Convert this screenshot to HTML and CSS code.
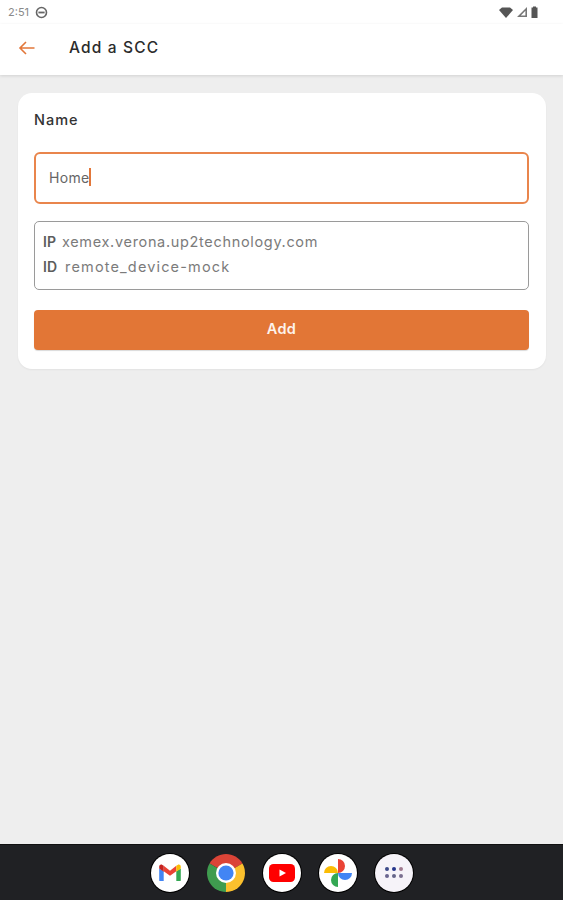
FILE: index.html
```html
<!DOCTYPE html>
<html lang="en">
<head>
    <meta charset="UTF-8">
    <meta name="viewport" content="width=device-width, initial-scale=1.0">
    <title>Add a SCC</title>
    <link rel="stylesheet" href="styles.css">
</head>
<body>
    <div class="app">
        <!-- Status bar -->
        <div class="status-bar">
            <div class="status-left">
                <span class="clock">2:51</span>
                <svg class="status-icon" width="13" height="13" viewBox="0 0 13 13">
                    <circle cx="6.5" cy="6.5" r="5" fill="none" stroke="#666" stroke-width="1.6"/>
                    <rect x="3.4" y="5.6" width="6.2" height="1.8" fill="#666"/>
                </svg>
            </div>
            <div class="status-right">
                <svg width="14" height="11" viewBox="0 0 14 11"><path d="M0 3 L3 0.6 H11 L14 3 L7 11 Z" fill="#555"/></svg>
                <svg width="12" height="12" viewBox="0 0 12 12"><path d="M11 1 V11 H1 Z M9.4 4.8 L4.8 9.6 H9.4 Z" fill="#777" fill-rule="evenodd"/></svg>
                <svg width="7" height="12" viewBox="0 0 7 12"><path d="M2 0.5 H5 V1.5 H6.5 V12 H0.5 V1.5 H2 Z" fill="#555"/></svg>
            </div>
        </div>

        <!-- App bar -->
        <header class="app-bar">
            <svg class="back" width="18" height="16" viewBox="0 0 18 16">
                <path d="M16.5 8 H2 M8 2 L2 8 L8 14" fill="none" stroke="#e2773a" stroke-width="1.6"/>
            </svg>
            <h1>Add a SCC</h1>
        </header>

        <!-- Content -->
        <main class="content">
            <section class="card">
                <div class="field-label">Name</div>
                <div class="name-input">Home<span class="caret"></span></div>
                <div class="info-box">
                    <div class="info-row"><b>IP</b> <span class="ip-value">xemex.verona.up2technology.com</span></div>
                    <div class="info-row"><b>ID</b> <span class="id-value">remote_device-mock</span></div>
                </div>
                <button class="add-btn">Add</button>
            </section>
        </main>

        <!-- Dock -->
        <footer class="dock">
            <div class="dock-icon">
                <svg width="26" height="18" viewBox="0 0 26 20">
                    <path d="M1 5 V18 a1 1 0 0 0 1 1 H6 V8 Z" fill="#4285f4"/>
                    <path d="M20 8 V19 H24 a1 1 0 0 0 1-1 V5 Z" fill="#34a853"/>
                    <path d="M6 8 L13 13 L20 8 V2 L13 7.5 L6 2 Z" fill="#ea4335"/>
                    <path d="M1 5 L6 8.5 V2 L4.5 1 C3 0 1 1 1 3 Z" fill="#c5221f"/>
                    <path d="M25 5 L20 8.5 V2 L21.5 1 C23 0 25 1 25 3 Z" fill="#fbbc04"/>
                </svg>
            </div>
            <div class="dock-icon chrome">
                <svg width="40" height="40" viewBox="0 0 40 40">
                    <path d="M20 20 L2.7 10 A20 20 0 0 1 37.3 10 Z" fill="#db4437"/>
                    <path d="M20 20 L37.3 10 A20 20 0 0 1 20 40 Z" fill="#fbc02d"/>
                    <path d="M20 20 L20 40 A20 20 0 0 1 2.7 10 Z" fill="#3f9c4f"/>
                    <circle cx="20" cy="20" r="10.5" fill="#fff"/>
                    <circle cx="20" cy="20" r="8" fill="#4285f4"/>
                </svg>
            </div>
            <div class="dock-icon">
                <svg width="26" height="18" viewBox="0 0 26 18">
                    <rect width="26" height="18" rx="4.5" fill="#f00"/>
                    <path d="M10.5 5.5 L17 9 L10.5 12.5 Z" fill="#fff"/>
                </svg>
            </div>
            <div class="dock-icon">
                <svg width="30" height="30" viewBox="0 0 30 30">
                    <path d="M15 15 V1 A7 7 0 0 1 15 15 Z" fill="#ea4335"/>
                    <path d="M15 15 H29 A7 7 0 0 1 15 15 Z" fill="#4285f4"/>
                    <path d="M15 15 V29 A7 7 0 0 1 15 15 Z" fill="#34a853"/>
                    <path d="M15 15 H1 A7 7 0 0 1 15 15 Z" fill="#fbbc04"/>
                </svg>
            </div>
            <div class="dock-icon apps">
                <div class="apps-grid">
                    <span class="dot-a"></span><span class="dot-b"></span><span class="dot-c"></span>
                    <span class="dot-d"></span><span class="dot-e"></span><span class="dot-f"></span>
                </div>
            </div>
        </footer>
    </div>
</body>
</html>
```

FILE: styles.css
```css
* {
    box-sizing: border-box;
}

body {
    margin: 0;
    font-family: 'Inter', 'Open Sans', sans-serif;
    background: #eeeeee;
    color: #222;
}

.app {
    width: 563px;
    height: 900px;
    display: flex;
    flex-direction: column;
}

.status-bar {
    height: 24px;
    background: #fff;
    display: flex;
    justify-content: space-between;
    align-items: center;
    padding: 0 25px 0 8px;
}

.status-left {
    display: flex;
    align-items: center;
    gap: 6px;
}

.clock {
    font-size: 11px;
    color: #8a8a8a;
}

.status-right {
    display: flex;
    align-items: center;
    gap: 3px;
}

.app-bar {
    height: 51px;
    background: #fff;
    display: flex;
    align-items: center;
    padding: 0 0 3px 18px;
    box-shadow: 0 1px 3px rgba(0, 0, 0, 0.12);
}

.app-bar h1 {
    margin: 0 0 2px 33px;
    font-size: 15.5px;
    font-weight: 500;
    letter-spacing: 1.15px;
    color: #2b2b2b;
}

.content {
    flex: 1;
    padding: 18px 17px 0 18px;
}

.card {
    background: #fff;
    border-radius: 14px;
    height: 276px;
    padding: 18px 17px 0 16px;
    box-shadow: 0 1px 2px rgba(0, 0, 0, 0.05);
}

.field-label {
    font-size: 14.5px;
    font-weight: 500;
    letter-spacing: 1px;
    line-height: 18px;
    color: #333;
}

.name-input {
    margin-top: 23px;
    height: 52px;
    border: 2px solid #e9854c;
    border-radius: 6px;
    display: flex;
    align-items: center;
    padding: 0 0 2px 13px;
    font-size: 14px;
    letter-spacing: 0.3px;
    color: #666;
}

.caret {
    width: 1.5px;
    height: 18px;
    background: #e2773a;
}

.info-box {
    margin-top: 17px;
    height: 69px;
    border: 1px solid #9a9a9a;
    border-radius: 5px;
    padding: 7px 8px 0;
}

.info-row {
    font-size: 14.5px;
    line-height: 25px;
    color: #7b7b7b;
}

.info-row b {
    color: #5c5c5c;
    font-weight: 600;
    font-size: 14px;
    margin-right: 1px;
}

.ip-value {
    letter-spacing: 0.67px;
    margin-left: 1px;
}

.id-value {
    letter-spacing: 1.15px;
    margin-left: 3px;
}

.add-btn {
    display: block;
    width: 100%;
    height: 40px;
    margin-top: 20px;
    padding-bottom: 4px;
    background: #e27636;
    color: #fdf3ec;
    border: none;
    border-radius: 4px;
    font-family: inherit;
    font-size: 14.5px;
    font-weight: 600;
    letter-spacing: 0.3px;
    box-shadow: 0 1px 1px rgba(0, 0, 0, 0.15);
}

.dock {
    height: 56px;
    background: #202124;
    border-top: 1px solid #111;
    display: flex;
    justify-content: center;
    align-items: center;
    gap: 18px;
}

.dock-icon {
    width: 38px;
    height: 38px;
    border-radius: 50%;
    background: #fff;
    box-shadow: 0 0 0 1px #000;
    display: flex;
    align-items: center;
    justify-content: center;
}

.dock-icon.chrome {
    background: none;
    box-shadow: none;
}

.dock-icon.apps {
    background: #f6f3f9;
}

.apps-grid {
    display: grid;
    grid-template-columns: repeat(3, 4px);
    gap: 3px 3px;
}

.apps-grid span {
    width: 4px;
    height: 4px;
    border-radius: 50%;
}

.apps-grid .dot-a { background: #3c4a8a; }
.apps-grid .dot-b { background: #26368c; }
.apps-grid .dot-c { background: #a07a90; }
.apps-grid .dot-d { background: #6a6590; }
.apps-grid .dot-e { background: #65658a; }
.apps-grid .dot-f { background: #7a6f90; }
```
